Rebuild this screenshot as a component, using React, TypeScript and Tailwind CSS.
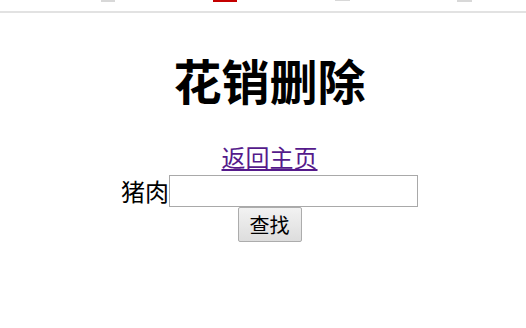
const cjk = "font-['Microsoft_YaHei','Noto_Sans_CJK_SC',sans-serif]";

function TopStrip() {
  return (
    <div className="relative h-[13px] border-b-2 border-[#e2e2e2]">
      <div className="absolute left-[101px] top-0 h-[2px] w-[14px] bg-[#d8d8d8]" />
      <div className="absolute left-[213px] top-0 h-[2px] w-[24px] bg-[#c40000]" />
      <div className="absolute left-[335px] top-0 h-[1px] w-[15px] bg-[#d8d8d8]" />
      <div className="absolute left-[457px] top-0 h-[2px] w-[15px] bg-[#d8d8d8]" />
    </div>
  );
}

export default function App() {
  return (
    <div className={`w-[526px] h-[328px] bg-white text-black ${cjk}`}>
      <TopStrip />
      <div className="flex flex-col items-center pl-[13px]">
        <h1 className="mt-[38px] text-[48px] font-bold leading-[56px]">花销删除</h1>
        <a href="#" className="mt-[36px] text-[24px] leading-[28px] text-[#551a8b] underline">
          返回主页
        </a>
        <div className="flex items-center text-[24px] leading-[28px] mt-[4px]">
          <span>猪肉</span>
          <input
            type="text"
            className="w-[249px] h-[32px] border border-[#a9a9a9] bg-white px-1 outline-none"
          />
        </div>
        <button className="h-[35px] w-[64px] border border-[#acacac] rounded-[2px] bg-gradient-to-b from-[#f2f2f2] to-[#dddddd] text-[20px] leading-[24px]">
          查找
        </button>
      </div>
    </div>
  );
}
